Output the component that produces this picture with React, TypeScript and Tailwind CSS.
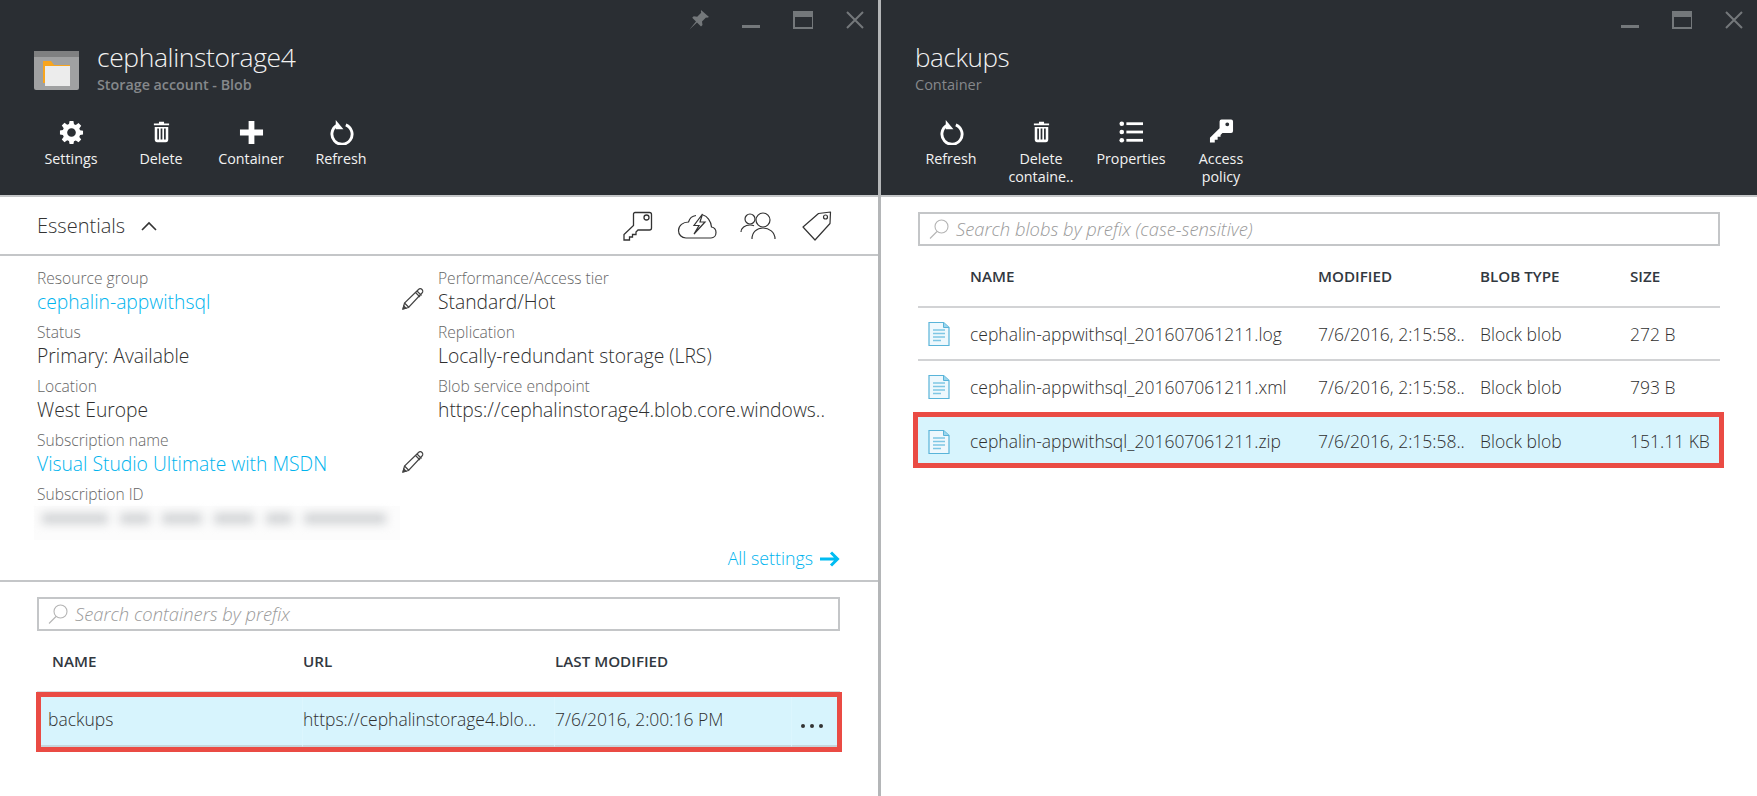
import type { ReactNode } from "react"

const font = "font-['Open_Sans','Noto_Sans',sans-serif]"

function GearIcon() {
  return (
    <svg width="25" height="25" viewBox="0 0 26 26" fill="#fff">
      <path
        fillRule="evenodd"
        d="M11 1h4l.6 3.400 1.900.8L20.300 3.200l2.800 2.800-2 2.800.8 1.900L25 11.300v3.800l-3.100.6-.8 1.900 2 2.800-2.800 2.800-2.800-2-1.900.8L15 25h-4l-.6-3.100-1.900-.8-2.800 2-2.800-2.800 2-2.800-.8-1.900L1 15v-4l3.100-.6.8-1.900-2-2.800 2.800-2.800 2.800 2 1.900-.8zM13 8.500a4.500 4.500 0 1 0 0 9 4.500 4.500 0 0 0 0-9z"
      />
    </svg>
  )
}

function TrashIcon() {
  return (
    <svg width="17" height="22" viewBox="0 0 20 26" fill="#fff">
      <path d="M7 1h6v2h6v2H1V3h6zM2 7h16v15a3 3 0 0 1-3 3H5a3 3 0 0 1-3-3zm3 2v13h2V9zm4 0v13h2V9zm4 0v13h2V9z" fillRule="evenodd" />
    </svg>
  )
}

function PlusIcon() {
  return (
    <svg width="25" height="25" viewBox="0 0 26 26" fill="#fff">
      <path d="M10 1h6v9h9v6h-9v9h-6v-9H1v-6h9z" />
    </svg>
  )
}

function RefreshIcon() {
  return (
    <svg width="25" height="25" viewBox="0 0 26 26" fill="none">
      <path d="M8.500 5.500A10.500 10.500 0 1 0 17.500 5" stroke="#fff" strokeWidth="3" />
      <path d="M7 0v9.500h8z" fill="#fff" />
    </svg>
  )
}

function ListIcon() {
  return (
    <svg width="24" height="24" viewBox="0 0 26 26" fill="#fff">
      <circle cx="3" cy="4" r="2.500" />
      <circle cx="3" cy="13" r="2.500" />
      <circle cx="3" cy="22" r="2.500" />
      <rect x="8" y="2.500" width="18" height="3" />
      <rect x="8" y="11.500" width="18" height="3" />
      <rect x="8" y="20.500" width="18" height="3" />
    </svg>
  )
}

function SolidKeyIcon() {
  return (
    <svg width="25" height="26" viewBox="0 0 26 26" fill="#fff">
      <path
        fillRule="evenodd"
        d="M13 0h10a2 2 0 0 1 2 2v10a2 2 0 0 1-2 2H14l-2 2v2H9v3H6v3H1v-5l10-10V2a2 2 0 0 1 2-2zm6 3a2 2 0 1 0 0 4 2 2 0 0 0 0-4z"
      />
    </svg>
  )
}

function OutlineKey() {
  return (
    <svg width="30" height="30" viewBox="0 0 30 30" fill="none" stroke="#333" strokeWidth="1.300">
      <path d="M12 1.500h14.500a2 2 0 0 1 2 2V17a2 2 0 0 1-2 2H15l-2 2v2.500H9.500V26H6.500v3H1v-5.500l9.500-9V3A1.500 1.500 0 0 1 12 1.500z" />
      <circle cx="23.500" cy="6.500" r="2.500" />
    </svg>
  )
}

function OutlineCloud() {
  return (
    <svg width="40" height="26" viewBox="0 0 40 26" fill="none" stroke="#333" strokeWidth="1.200">
      <path d="M19 2.500C15 3 12.500 5.500 11.500 9 6 9 1.500 12.500 1.500 17.500 1.500 21.500 4.500 25 9 25h25c3 0 5-2.500 5-5.500s-2-5-4.500-5.500C34 8 30 3 26 2" />
      <path d="M25.500 1L17 12.500h5L17 21l11-12h-5z" fill="#fff" strokeLinejoin="miter" />
    </svg>
  )
}

function OutlinePeople() {
  return (
    <svg width="38" height="28" viewBox="0 0 38 28" fill="none" stroke="#333" strokeWidth="1.200" className="-ml-[1px]">
      <circle cx="10" cy="7" r="5" />
      <path d="M1 20c0-4 4-7 9-7 1.500 0 3 .3 4 .8" />
      <circle cx="23" cy="8" r="7" />
      <path d="M12 27c0-7 5-11 11-11s12 4 12 11" />
    </svg>
  )
}

function OutlineTag() {
  return (
    <svg width="30" height="30" viewBox="0 0 30 30" fill="none" stroke="#333" strokeWidth="1.200">
      <path d="M1 16L16.500 2.500 28.500 1l-.5 11.500L13 29z" strokeLinejoin="round" />
      <circle cx="23.500" cy="6" r="2" />
    </svg>
  )
}

function Pencil() {
  return (
    <svg width="22" height="22" viewBox="0 0 22 22" fill="none" stroke="#444" strokeWidth="1.200">
      <path d="M1 21l1.500-6L16.500 1.500c1-1 2.500-1 3.500 0s1 2.500 0 3.500L6.500 19.500z" />
      <path d="M2.500 15l4.500 4.500M15 3l4.500 4.500M13.500 4.500l4.500 4.500" />
      <path d="M1 21l.8-3 2.200 2.200z" fill="#444" />
    </svg>
  )
}

function SearchGlyph() {
  return (
    <svg width="20" height="20" viewBox="0 0 20 20" fill="none" stroke="#b4b4b4" strokeWidth="1.100">
      <circle cx="12.500" cy="7.500" r="6.500" />
      <path d="M8 12.500L1 19.500" />
    </svg>
  )
}

function FileIcon() {
  return (
    <svg width="22" height="24" viewBox="0 0 22 24" fill="none">
      <path d="M1 .5h14.500l5.500 5V23.500H1z" fill="#eef8fd" stroke="#59b4d9" strokeWidth="1.200" />
      <path d="M15.500.5v5H21" fill="#9cd6ee" stroke="#59b4d9" strokeWidth="1" />
      <path d="M5 8h12M5 11.500h12M5 15h12M5 18.500h8" stroke="#7fc6e4" strokeWidth="1.500" />
    </svg>
  )
}

function WindowControls({ pin }: { pin?: boolean }) {
  return (
    <div className="flex h-10 items-center justify-end gap-[32px] pr-[13px]">
      {pin && (
        <svg width="20" height="20" viewBox="0 0 20 20" fill="#74787b">
          <path d="M12 0l8 7-2 .8-1-.3-4 4 .5 3.500-1.500 1.500-4-4-7.500 7 6.500-8-3.800-3.700 1.500-1.500 3.500.5 4-4-.3-1.300z" />
        </svg>
      )}
      <svg width="20" height="20" viewBox="0 0 20 20" fill="#74787b">
        <rect x="1" y="15" width="18" height="3" />
      </svg>
      <svg width="20" height="20" viewBox="0 0 20 20" fill="none" stroke="#74787b">
        <rect x="1" y="2" width="19" height="16" strokeWidth="2" />
        <rect x="1" y="2" width="19" height="4" fill="#74787b" strokeWidth="2" />
      </svg>
      <svg width="20" height="20" viewBox="0 0 20 20" fill="none" stroke="#74787b" strokeWidth="2">
        <path d="M2 2l16 16M18 2L2 18" />
      </svg>
    </div>
  )
}

function Command({ icon, label, second }: { icon: ReactNode; label: string; second?: string }) {
  return (
    <div className="flex w-[90px] flex-col items-center text-white">
      <div className="flex h-[28px] items-center justify-center">{icon}</div>
      <div className="mt-[4px] whitespace-nowrap text-center text-[14.300px] leading-[18px] text-[#f2f2f2]">
        <div>{label}</div>
        {second && <div>{second}</div>}
      </div>
    </div>
  )
}

function SearchBox({ placeholder }: { placeholder: string }) {
  return (
    <div className="flex h-[34px] items-center gap-[7px] border-2 border-[#c4c6c8] bg-white pl-[9px]">
      <SearchGlyph />
      <span className="text-[18.400px] italic font-light text-[#9a9a9a]">{placeholder}</span>
    </div>
  )
}

function Field({ label, value, link }: { label: string; value: string; link?: boolean }) {
  return (
    <div className="h-[54px]">
      <div className="h-[24px] text-[15.600px] font-light leading-[24px] text-[#666]">{label}</div>
      <div className={`h-[30px] whitespace-nowrap text-[19.300px] font-light leading-[23px] ${link ? "text-[#00b4ee]" : "text-[#2f2f2f]"}`}>
        {value}
      </div>
    </div>
  )
}

const blobs = [
  { name: "cephalin-appwithsql_201607061211.log", size: "272 B" },
  { name: "cephalin-appwithsql_201607061211.xml", size: "793 B" },
  { name: "cephalin-appwithsql_201607061211.zip", size: "151.11 KB", selected: true },
]

function BlobRowCells({ name, size }: { name: string; size: string }) {
  return (
    <>
      <div className="flex w-[52px] pl-[10px]">
        <FileIcon />
      </div>
      <div className="w-[348px] whitespace-nowrap">{name}</div>
      <div className="w-[162px] whitespace-nowrap">7/6/2016, 2:15:58..</div>
      <div className="w-[150px] whitespace-nowrap">Block blob</div>
      <div className="whitespace-nowrap">{size}</div>
    </>
  )
}

export default function App() {
  return (
    <div className={`flex h-[796px] w-[1757px] overflow-hidden bg-white ${font}`}>
      <section className="w-[878px] shrink-0">
        <header className="h-[195px] bg-[#2a2e33]">
          <WindowControls pin />
          <div className="flex pl-[34px]">
            <svg width="45" height="40" viewBox="0 0 45 40" className="mt-[11px]">
              <rect width="45" height="39" rx="2" fill="#a0a1a2" />
              <rect width="45" height="6" fill="#7f8081" />
              <path d="M9 10h8l3 4h16v18H9z" fill="#f8a51e" />
              <rect x="11" y="15" width="25" height="20" fill="#ececec" />
            </svg>
            <div className="ml-[18px]">
              <div className="h-[36px] text-[26.500px] font-light leading-[34px] tracking-[-0.4px] text-[#f2f2f2]">cephalinstorage4</div>
              <div className="text-[14.300px] font-semibold leading-[18px] text-[#85888b]">Storage account - Blob</div>
            </div>
          </div>
          <div className="mt-[24px] flex pl-[26px]">
            <Command icon={<GearIcon />} label="Settings" />
            <Command icon={<TrashIcon />} label="Delete" />
            <Command icon={<PlusIcon />} label="Container" />
            <Command icon={<RefreshIcon />} label="Refresh" />
          </div>
        </header>

        <div className="flex h-[61px] items-center justify-between border-y-2 border-[#c4c6c8] pl-[37px] pr-[46px]">
          <div className="flex items-center gap-[16px]">
            <span className="text-[20px] font-light text-[#333]">Essentials</span>
            <svg width="16" height="10" viewBox="0 0 16 10" fill="none" stroke="#333" strokeWidth="1.600">
              <path d="M1 9l7-7 7 7" />
            </svg>
          </div>
          <div className="flex items-center gap-[24px]">
            <OutlineKey />
            <OutlineCloud />
            <OutlinePeople />
            <OutlineTag />
          </div>
        </div>

        <div className="flex h-[326px] flex-col border-b-2 border-[#c4c6c8]">
          <div className="flex flex-1 pl-[37px] pt-[10px]">
            <div className="flex w-[387px] justify-between">
              <div>
                <Field label="Resource group" value="cephalin-appwithsql" link />
                <Field label="Status" value="Primary: Available" />
                <Field label="Location" value="West Europe" />
                <Field label="Subscription name" value="Visual Studio Ultimate with MSDN" link />
                <div className="h-[24px] text-[15.600px] font-light leading-[24px] text-[#666]">Subscription ID</div>
                <div className="-ml-[3px] flex h-[34px] w-[366px] items-center bg-[#fcfcfc] pb-[10px] pl-[8px]">
                  <div className="flex items-center gap-[12px] blur-[5px]">
                    <div className="h-[11px] w-[66px] bg-[#d2d4d6]" />
                    <div className="h-[11px] w-[30px] bg-[#d2d4d6]" />
                    <div className="h-[11px] w-[40px] bg-[#d2d4d6]" />
                    <div className="h-[11px] w-[40px] bg-[#d2d4d6]" />
                    <div className="h-[11px] w-[26px] bg-[#d2d4d6]" />
                    <div className="h-[11px] w-[82px] bg-[#d2d4d6]" />
                  </div>
                </div>
              </div>
              <div className="flex flex-col gap-[141px] pt-[22px]">
                <Pencil />
                <Pencil />
              </div>
            </div>
            <div className="ml-[14px]">
              <Field label="Performance/Access tier" value="Standard/Hot" />
              <Field label="Replication" value="Locally-redundant storage (LRS)" />
              <Field label="Blob service endpoint" value="https://cephalinstorage4.blob.core.windows.." />
            </div>
          </div>
          <div className="flex items-center justify-end gap-[7px] pb-[8px] pr-[38px] text-[#00b4ee]">
            <span className="text-[17.800px] font-light">All settings</span>
            <svg width="20" height="16" viewBox="0 0 20 16" fill="none" stroke="#00bcf2" strokeWidth="3">
              <path d="M0 8h17M11 1.500L17.500 8 11 14.500" />
            </svg>
          </div>
        </div>

        <div className="pl-[37px] pr-[38px] pt-[15px]">
          <SearchBox placeholder="Search containers by prefix" />
          <div className="flex h-[60px] items-center text-[15.200px] font-semibold text-[#32383f]">
            <div className="w-[266px] pl-[15px]">NAME</div>
            <div className="w-[252px]">URL</div>
            <div>LAST MODIFIED</div>
          </div>
          <div className="-mb-[1px] h-[2px] bg-[#dcdddf]" />
          <div className="-ml-[1px] -mr-[2px] flex h-[60px] border-[5px] border-[#ea4b44] bg-[#d7f4fd] text-[17.500px] font-light text-[#2f2f2f]">
            <div className="flex w-[262px] items-center border-r border-b-2 border-r-[#dcf6fe] border-b-[#c6d6dc] pb-[4px] pl-[7px]">backups</div>
            <div className="flex w-[252px] items-center overflow-hidden whitespace-nowrap border-r border-b-2 border-r-[#dcf6fe] border-b-[#c6d6dc] pb-[4px]">https://cephalinstorage4.blo...</div>
            <div className="flex w-[237px] items-center whitespace-nowrap border-r border-b-2 border-r-[#dcf6fe] border-b-[#c6d6dc] pb-[4px]">7/6/2016, 2:00:16 PM</div>
            <div className="flex flex-1 items-center gap-[5px] border-b-2 border-b-[#c6d6dc] pl-[9px] pt-[9px]">
              <span className="h-[4px] w-[4px] rounded-full bg-[#333]" />
              <span className="h-[4px] w-[4px] rounded-full bg-[#333]" />
              <span className="h-[4px] w-[4px] rounded-full bg-[#333]" />
            </div>
          </div>
        </div>
      </section>

      <div className="w-[3px] shrink-0 bg-[#b4b6b8]" />

      <section className="min-w-0 flex-1">
        <header className="h-[195px] bg-[#2a2e33]">
          <WindowControls />
          <div className="pl-[34px]">
            <div className="h-[36px] text-[26px] font-light leading-[34px] tracking-[-0.4px] text-[#f2f2f2]">backups</div>
            <div className="text-[14.500px] leading-[18px] text-[#85888b]">Container</div>
          </div>
          <div className="mt-[24px] flex pl-[25px]">
            <Command icon={<RefreshIcon />} label="Refresh" />
            <Command icon={<TrashIcon />} label="Delete" second="containe.." />
            <Command icon={<ListIcon />} label="Properties" />
            <Command icon={<SolidKeyIcon />} label="Access" second="policy" />
          </div>
        </header>

        <div className="h-[2px] bg-[#c4c6c8]" />

        <div className="pl-[37px] pr-[37px] pt-[15px]">
          <SearchBox placeholder="Search blobs by prefix (case-sensitive)" />
          <div className="flex h-[60px] items-center text-[15.200px] font-semibold text-[#32383f]">
            <div className="w-[400px] pl-[52px]">NAME</div>
            <div className="w-[162px]">MODIFIED</div>
            <div className="w-[150px]">BLOB TYPE</div>
            <div>SIZE</div>
          </div>
          <div className="border-t-2 border-[#d2d3d5]" />
          {blobs.map((blob) =>
            blob.selected ? (
              <div key={blob.name} className="-ml-[5px] -mr-[4px] -mt-[2px] flex h-[56px] items-center border-[5px] border-[#ea4b44] bg-[#d7f4fd] pt-[3px] text-[17.500px] font-light text-[#2f2f2f]">
                <BlobRowCells name={blob.name} size={blob.size} />
              </div>
            ) : (
              <div key={blob.name} className="flex h-[53px] items-center border-b-2 border-[#d2d3d5] pt-[1px] text-[17.500px] font-light text-[#2f2f2f]">
                <BlobRowCells name={blob.name} size={blob.size} />
              </div>
            ),
          )}
        </div>
      </section>
    </div>
  )
}
